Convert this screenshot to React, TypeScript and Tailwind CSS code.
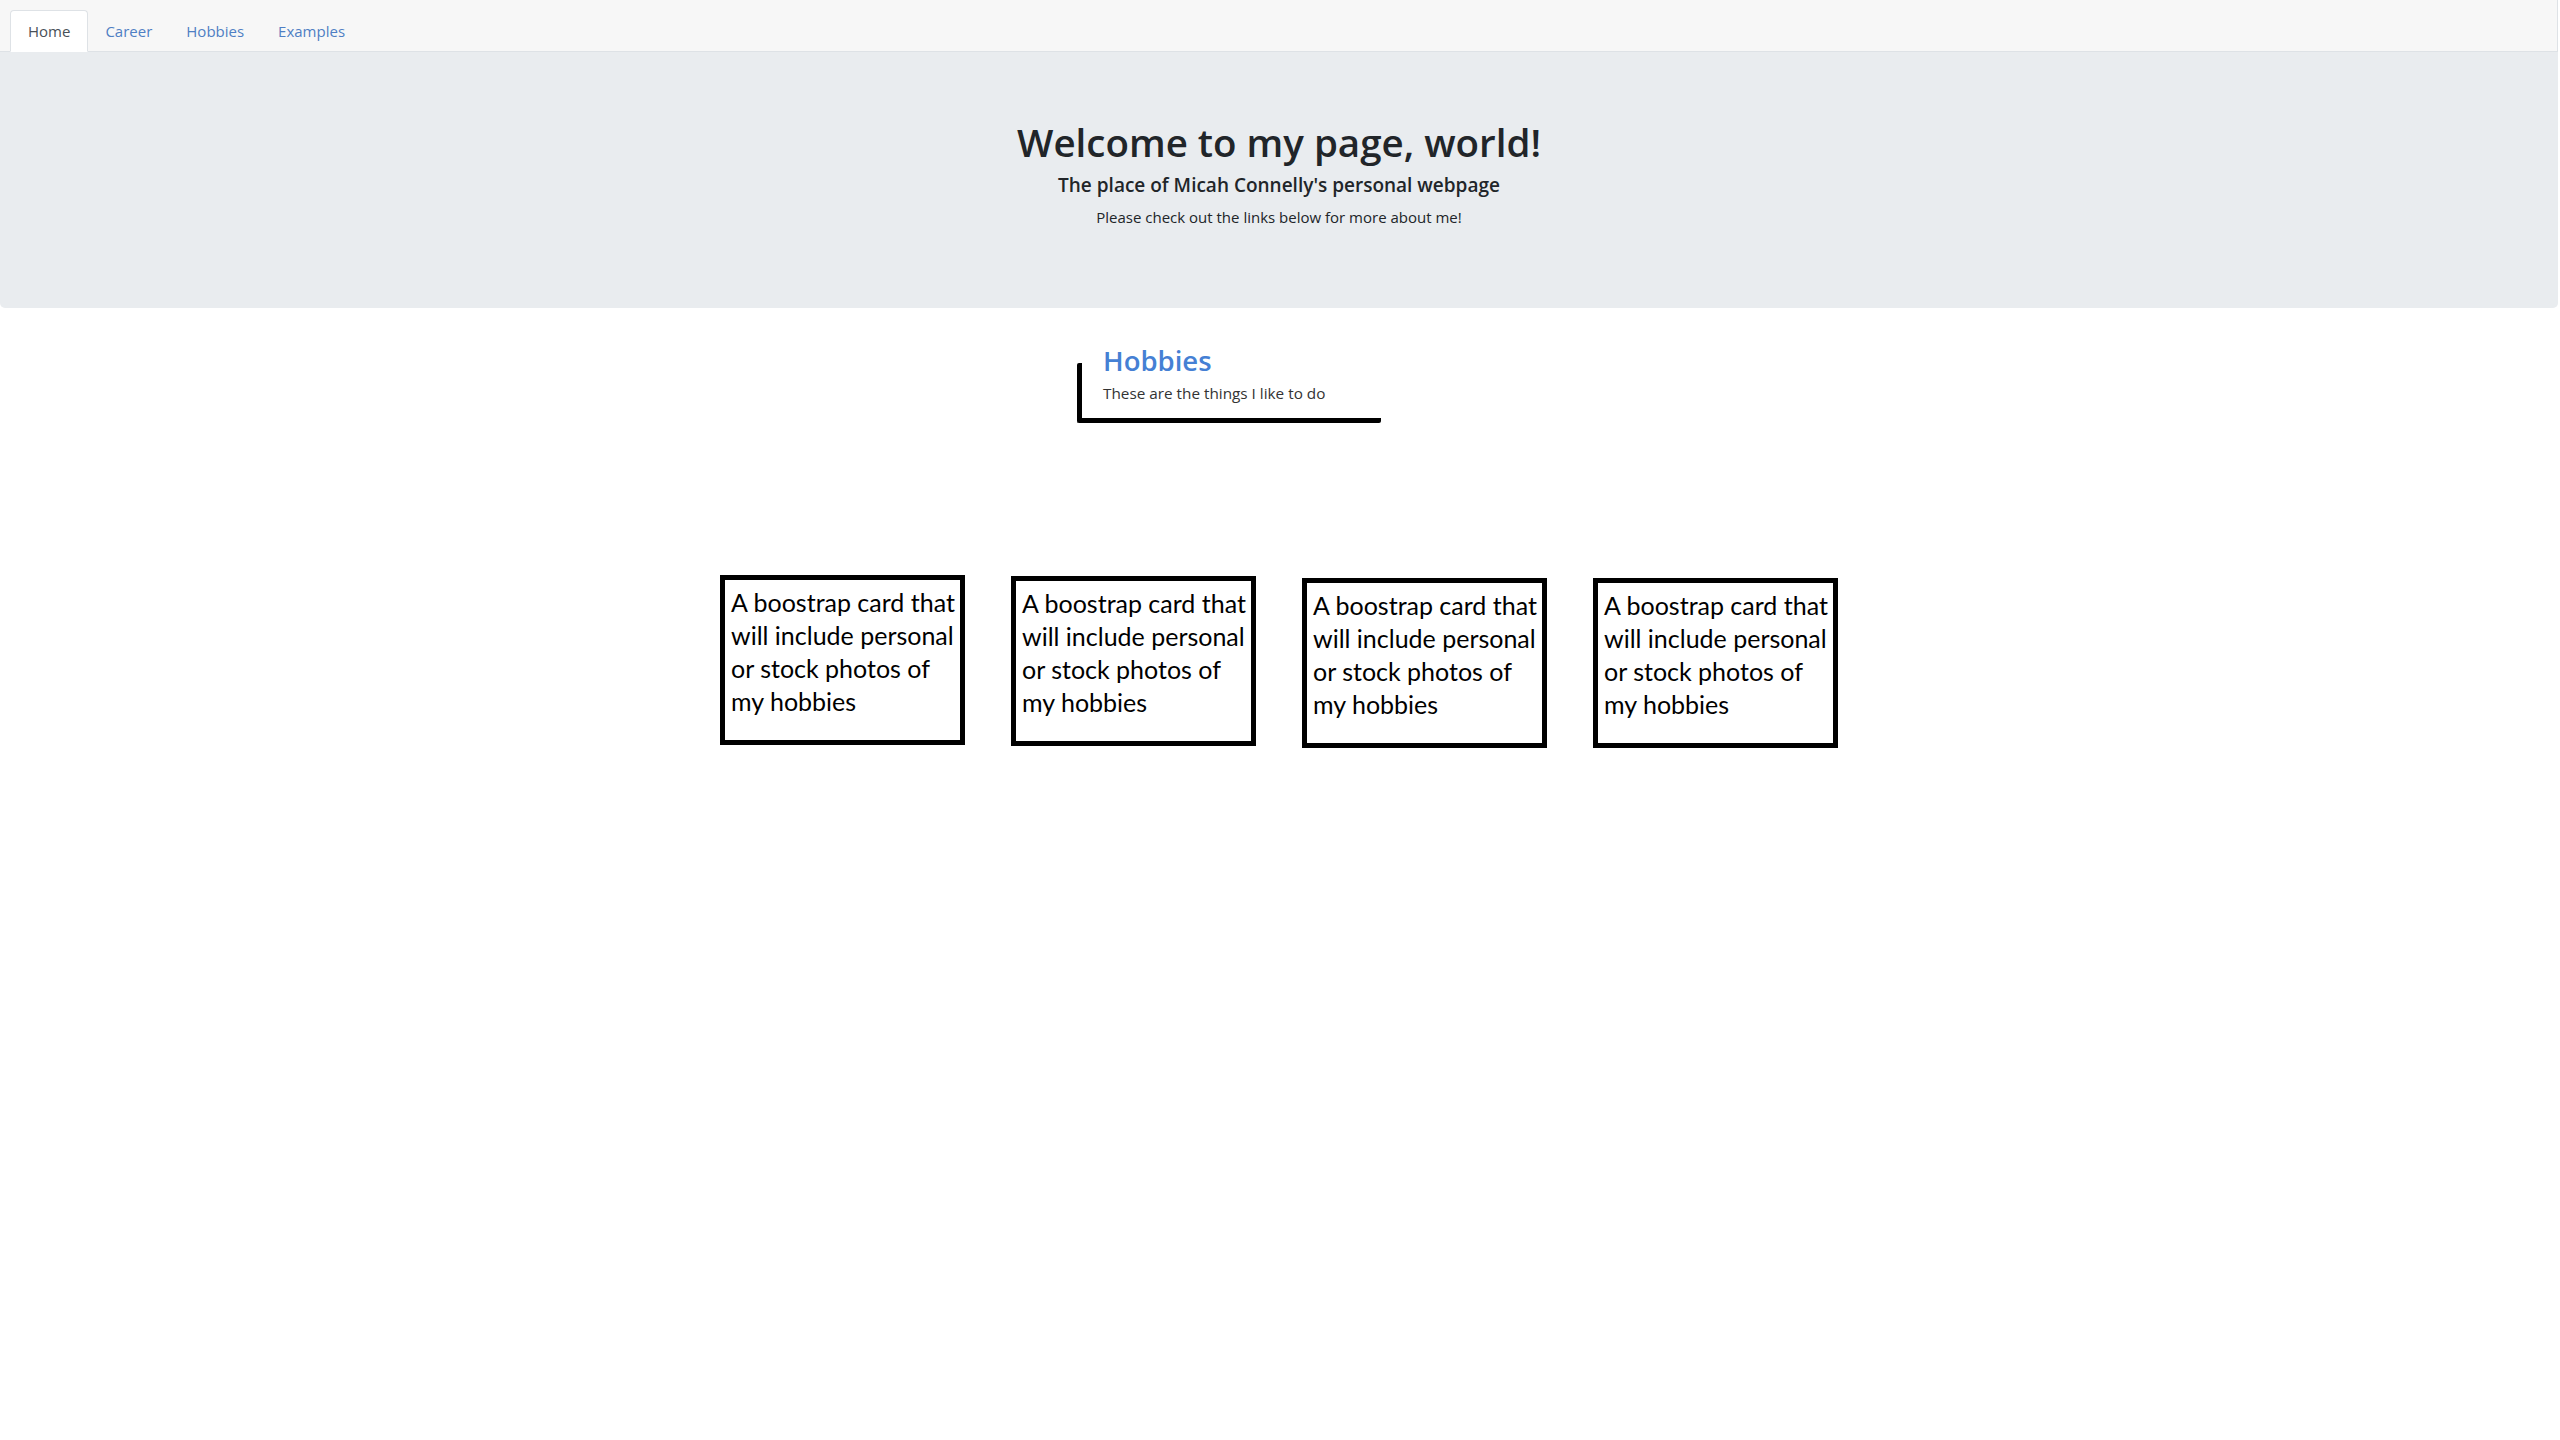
import React from "react";

const cardText = "A boostrap card that will include personal or stock photos of my hobbies";

function Card({ offset }: { offset: string }) {
  return (
    <div
      className={`w-[245px] h-[170px] border-[5px] border-black bg-white pl-[6px] pr-[2px] pt-[6px] ${offset}`}
    >
      <p className="text-[25px] leading-[33px] text-black" style={{ fontFamily: 'Lato, "Open Sans", sans-serif' }}>
        {cardText}
      </p>
    </div>
  );
}

export default function App() {
  return (
    <div
      className="w-[2558px] min-h-[1440px] bg-white text-[#212529]"
      style={{ fontFamily: '"Open Sans", "Noto Sans", sans-serif' }}
    >
      {/* Nav tabs */}
      <div className="bg-[#f7f7f7] border-b border-r border-[#dee2e6] pt-[10px] pl-[10px] h-[52px] flex items-end">
        <ul className="flex -mb-px">
          <li className="px-[17px] h-[42px] flex items-center bg-white border border-[#dee2e6] border-b-white rounded-t-[4px] text-[15px] text-[#495057]">
            Home
          </li>
          <li className="px-[17px] h-[42px] flex items-center text-[15px] text-[#4f7fc4]">Career</li>
          <li className="px-[17px] h-[42px] flex items-center text-[15px] text-[#4f7fc4]">Hobbies</li>
          <li className="px-[17px] h-[42px] flex items-center text-[15px] text-[#4f7fc4]">Examples</li>
        </ul>
      </div>

      {/* Jumbotron */}
      <div className="bg-[#e9ecef] rounded-b-[5px] h-[256px] pt-[66px] flex flex-col items-center">
        <h1 className="text-[38.5px] leading-[48px] font-semibold">Welcome to my page, world!</h1>
        <h5 className="mt-[7px] text-[19px] leading-[24px] font-semibold">
          The place of Micah Connelly's personal webpage
        </h5>
        <p className="mt-[8px] text-[15px] leading-[24px]">Please check out the links below for more about me!</p>
      </div>

      {/* Hobbies header */}
      <div className="flex justify-center pt-[55px]">
        <div className="mr-[100px] w-[304px] h-[60px] border-l-[5px] border-b-[5px] border-black rounded-[2px] pl-[21px]">
          <h3 className="-mt-[19px] text-[27.5px] leading-[34px] font-semibold text-[#4580d4]">Hobbies</h3>
          <p className="mt-[5px] text-[15.3px] leading-[20px] text-[#333]">These are the things I like to do</p>
        </div>
      </div>

      {/* Cards */}
      <div className="flex justify-center items-start gap-[46px] pt-[152px]">
        <Card offset="mt-0" />
        <Card offset="mt-[1px]" />
        <Card offset="mt-[3px]" />
        <Card offset="mt-[3px]" />
      </div>
    </div>
  );
}
